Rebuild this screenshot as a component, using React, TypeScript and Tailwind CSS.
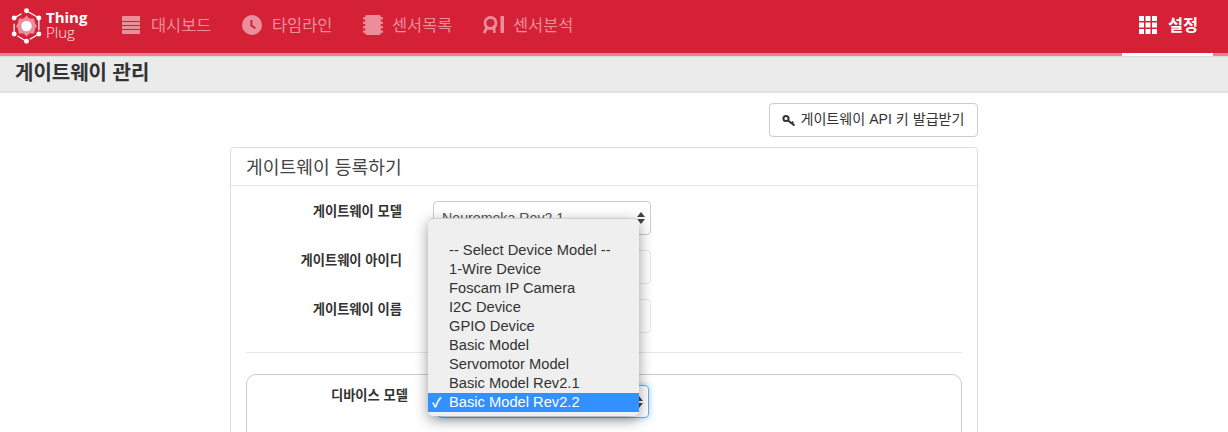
import React from 'react'

const fontStack = '[font-family:"Liberation_Sans","Noto_Sans_CJK_KR",sans-serif]'

// Logo mark + wordmark
const Logo = () => (
  <div className="flex items-center w-[75px] h-[44px] shrink-0">
    <svg width="33" height="38" viewBox="0 0 34 40" className="shrink-0">
      <path d="M17 4 L30 11.500 L30 28.500 L17 36 L4 28.500 L4 11.500 Z" fill="none" stroke="#fff" strokeWidth="1.300" strokeDasharray="11 4" strokeDashoffset="-2" />
      <path d="M17 9 L20 12 L25 12 L26 17 L28 20 L26 23 L25 28 L20 28 L17 31 L14 28 L9 28 L8 23 L6 20 L8 17 L9 12 L14 12 Z" fill="#ee8d9a" />
      <circle cx="17" cy="20" r="5.500" fill="#fff" />
      <circle cx="17" cy="4" r="2.600" fill="#fff" />
      <circle cx="30" cy="11.500" r="2.600" fill="#fff" />
      <circle cx="30" cy="28.500" r="2.600" fill="#fff" />
      <circle cx="17" cy="36" r="2.600" fill="#fff" />
      <circle cx="4" cy="28.500" r="2.600" fill="#fff" />
      <circle cx="4" cy="11.500" r="2.600" fill="#fff" />
    </svg>
    <div className="ml-[3px] -mt-[2px] flex flex-col text-white text-[15px] leading-[15px] [font-family:'Open_Sans',sans-serif]">
      <span className="font-bold">Thing</span>
      <span className="font-light opacity-90">Plug</span>
    </div>
  </div>
)

const DashboardIcon = () => (
  <svg width="18" height="18" viewBox="0 0 18 18" fill="currentColor">
    <rect x="0" y="0" width="18" height="5" />
    <rect x="0" y="6" width="18" height="3" />
    <rect x="0" y="10" width="18" height="3" />
    <rect x="0" y="14" width="18" height="4" />
  </svg>
)

const ClockIcon = () => (
  <svg width="20" height="20" viewBox="0 0 18 18">
    <circle cx="9" cy="9" r="9" fill="currentColor" />
    <path d="M8.500 4.500 V9.500 L12 12" fill="none" stroke="#d62136" strokeWidth="1.800" />
  </svg>
)

const ChipIcon = () => (
  <svg width="20" height="20" viewBox="0 0 18 18" fill="currentColor">
    <rect x="2" y="0" width="14" height="18" rx="1.500" />
    <rect x="0" y="2" width="18" height="2" />
    <rect x="0" y="6" width="18" height="2" />
    <rect x="0" y="10" width="18" height="2" />
    <rect x="0" y="14" width="18" height="2" />
  </svg>
)

const AnalysisIcon = () => (
  <svg width="21" height="18" viewBox="0 0 21 18" fill="none">
    <circle cx="7.500" cy="7" r="5.500" stroke="currentColor" strokeWidth="2.800" />
    <path d="M4 11.500 L1 17" stroke="currentColor" strokeWidth="2.800" />
    <rect x="10" y="9" width="2.500" height="8" fill="currentColor" />
    <rect x="17.500" y="0" width="3.500" height="17" fill="currentColor" />
  </svg>
)

const GridIcon = () => (
  <svg width="18" height="18" viewBox="0 0 18 18" fill="#fff">
    {[0, 6.500, 13].map((y) =>
      [0, 6.500, 13].map((x) => <rect key={`${x}-${y}`} x={x} y={y} width="5" height="5" />)
    )}
  </svg>
)

const KeyIcon = () => (
  <svg width="14" height="13" viewBox="0 0 14 13" fill="none" stroke="#333">
    <circle cx="4" cy="4.500" r="2.600" strokeWidth="2" />
    <path d="M6 6.500 L12.500 11.500 M9.500 9.300 L11.300 7.800" strokeWidth="2" />
  </svg>
)

const navItems = [
  { label: '대시보드', icon: <DashboardIcon />, cls: 'w-[120px] gap-[11px]' },
  { label: '타임라인', icon: <ClockIcon />, cls: 'w-[121px] gap-[10px]' },
  { label: '센서목록', icon: <ChipIcon />, cls: 'w-[120px] gap-[9px]' },
  { label: '센서분석', icon: <AnalysisIcon />, cls: 'w-[110px] gap-[9px]' },
]

const deviceModels = [
  '-- Select Device Model --',
  '1-Wire Device',
  'Foscam IP Camera',
  'I2C Device',
  'GPIO Device',
  'Basic Model',
  'Servomotor Model',
  'Basic Model Rev2.1',
]

const FormRow = ({ label, border, children }: { label: string; border: string; children?: React.ReactNode }) => (
  <div className="flex h-[34px] mb-[15px]">
    <label className="w-[156px] text-right text-[13.300px] font-bold text-[#333] leading-[19px] pt-[1px] shrink-0">{label}</label>
    <div className={`ml-[31px] w-[218px] h-[34px] border ${border} rounded-[4px] bg-white relative text-[14.200px] text-[#555] pl-[8px] leading-[32px]`}>
      {children}
    </div>
  </div>
)

const SelectArrows = () => (
  <svg width="8" height="12" viewBox="0 0 8 12" fill="#444" className="absolute right-[5px] top-[10px]">
    <path d="M4 0 L8 5 H0 Z M0 7 H8 L4 12 Z" />
  </svg>
)

export default function App() {
  return (
    <div className={`w-[1228px] h-[432px] overflow-hidden bg-white relative ${fontStack}`}>
      {/* Top nav */}
      <header className="h-[56px] bg-[#d52136] border-b-[3px] border-[#e78491] flex pl-[10px]">
        <div className="pt-[4px]">
          <Logo />
        </div>
        <nav className="flex ml-[37px]">
          {navItems.map((item) => (
            <div key={item.label} className={`flex items-center h-[53px] pb-[3px] text-[#eb8e9c] text-[16.400px] ${item.cls}`}>
              {item.icon}
              <span>{item.label}</span>
            </div>
          ))}
        </nav>
        <div className="ml-auto mr-[15px] w-[91px] h-[56px] border-b-[3px] border-white flex items-center pl-[17px] gap-[11px] pb-[3px] text-white text-[16.400px] font-bold">
          <GridIcon />
          <span>설정</span>
        </div>
      </header>

      {/* Page title */}
      <div className="h-[37px] bg-[#ebebeb] border-t border-[#dcdcdc] border-b-2 border-b-[#e0e0e0] pl-[15px] text-[20px] font-bold text-[#333] leading-[32px]">
        게이트웨이 관리
      </div>

      <main className="w-[748px] ml-[230px]">
        <div className="flex justify-end pt-[10px] pb-[10px]">
          <button className="w-[209px] h-[34px] border border-[#ccc] rounded-[4px] bg-white flex items-center justify-center gap-[4px] text-[14.100px] text-[#333]">
            <KeyIcon />
            <span>게이트웨이 API 키 발급받기</span>
          </button>
        </div>

        <section className="border border-[#ddd] rounded-[4px] h-[400px]">
          <h2 className="h-[38px] border-b border-[#e5e5e5] pl-[15px] text-[18.200px] text-[#444] leading-[41px] font-normal">게이트웨이 등록하기</h2>
          <div className="px-[15px] pt-[15px]">
            <FormRow label="게이트웨이 모델" border="border-[#ccc]">
              Neuromeka Rev2.1
              <SelectArrows />
            </FormRow>
            <FormRow label="게이트웨이 아이디" border="border-[#e6e6e6]" />
            <FormRow label="게이트웨이 이름" border="border-[#e6e6e6]" />
            <div className="border-t border-[#e8e8e8] mt-[19px]" />
            <div className="mt-[21px] border border-[#ccc] rounded-[10px] h-[200px] pt-[10px] flex">
              <label className="w-[161px] text-right text-[13.300px] font-bold text-[#333] leading-[19px] pt-[1px] shrink-0">디바이스 모델</label>
              <div className="ml-[30px] w-[211px] h-[33px] border border-[#66afe9] rounded-[4px] shadow-[0_0_6px_rgba(102,175,233,0.6)] relative">
                <SelectArrows />
              </div>
            </div>
          </div>
        </section>
      </main>

      {/* Open native select menu */}
      <div className="absolute left-[428px] top-[218px] w-[211px] h-[198px] bg-[#efefef] rounded-[5px] shadow-[0_4px_14px_rgba(0,0,0,0.4)] border-t border-[#d0d0d0] pt-[22px] text-[14.700px] leading-[19px] text-[#333]">
        {deviceModels.map((model) => (
          <div key={model} className="pl-[21px] h-[19px]">{model}</div>
        ))}
        <div className="pl-[4px] h-[19px] bg-[#3390ff] text-white flex">
          <span className="w-[17px] text-[13px] font-bold">✓</span>
          <span>Basic Model Rev2.2</span>
        </div>
      </div>
    </div>
  )
}
